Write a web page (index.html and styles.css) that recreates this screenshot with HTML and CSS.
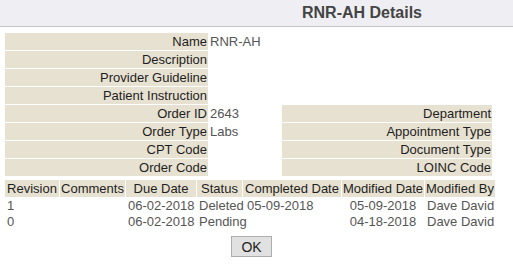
FILE: index.html
```html
<!DOCTYPE html>
<html lang="en">
<head>
  <meta charset="UTF-8" />
  <title>RNR-AH Details</title>
  <link rel="stylesheet" href="styles.css">
</head>
<body>
  <div class="title-bar">RNR-AH Details</div>

  <div class="content">
    <table class="details">
      <colgroup>
        <col class="c-lbl">
        <col class="c-val">
        <col class="c-lbl2">
        <col class="c-val2">
      </colgroup>
      <tr><td class="lbl">Name</td><td class="val" colspan="3">RNR-AH</td></tr>
      <tr><td class="lbl">Description</td><td class="val" colspan="3"></td></tr>
      <tr><td class="lbl">Provider Guideline</td><td class="val" colspan="3"></td></tr>
      <tr><td class="lbl">Patient Instruction</td><td class="val" colspan="3"></td></tr>
      <tr><td class="lbl">Order ID</td><td class="val">2643</td><td class="lbl">Department</td><td class="val"></td></tr>
      <tr><td class="lbl">Order Type</td><td class="val">Labs</td><td class="lbl">Appointment Type</td><td class="val"></td></tr>
      <tr><td class="lbl">CPT Code</td><td class="val"></td><td class="lbl">Document Type</td><td class="val"></td></tr>
      <tr><td class="lbl">Order Code</td><td class="val"></td><td class="lbl">LOINC Code</td><td class="val"></td></tr>
    </table>

    <table class="revisions">
      <colgroup>
        <col class="w-rev">
        <col class="w-com">
        <col class="w-due">
        <col class="w-status">
        <col class="w-done">
        <col class="w-mod">
        <col class="w-by">
      </colgroup>
      <tr>
        <th>Revision</th>
        <th>Comments</th>
        <th>Due Date</th>
        <th>Status</th>
        <th>Completed Date</th>
        <th>Modified Date</th>
        <th>Modified By</th>
      </tr>
      <tr>
        <td>1</td>
        <td></td>
        <td>06-02-2018</td>
        <td>Deleted</td>
        <td class="done">05-09-2018</td>
        <td class="mid">05-09-2018</td>
        <td class="mid">Dave David</td>
      </tr>
      <tr>
        <td>0</td>
        <td></td>
        <td>06-02-2018</td>
        <td>Pending</td>
        <td class="done"></td>
        <td class="mid">04-18-2018</td>
        <td class="mid">Dave David</td>
      </tr>
    </table>

    <div class="actions">
      <button type="button" class="ok-btn">OK</button>
    </div>
  </div>
</body>
</html>
```

FILE: styles.css
```css
* {
  box-sizing: border-box;
}

body {
  margin: 0;
  font-family: "Liberation Sans", Arial, sans-serif;
  font-size: 13px;
  color: #555;
  background: #fff;
}

.title-bar {
  height: 27px;
  line-height: 25px;
  padding-left: 302px;
  background: #efeef3;
  border-bottom: 1px solid #c6c6ca;
  font-size: 16px;
  font-weight: bold;
  color: #444;
}

.content {
  width: 492px;
  margin-left: 4px;
}

table {
  table-layout: fixed;
  width: 492px;
  border-collapse: separate;
  border-spacing: 1px;
}

.details {
  margin-top: 5px;
}

.c-lbl { width: 203px; }
.c-val { width: 72px; }
.c-lbl2 { width: 210px; }
.c-val2 { width: 2px; }

.details td {
  padding: 1px;
  line-height: 15px;
  height: 17px;
  white-space: nowrap;
}

.lbl {
  background: #e7e1d1;
  color: #1e1e1e;
  text-align: right;
}

.val {
  color: #555;
  text-align: left;
}

.revisions {
  margin-top: 2px;
}

.w-rev { width: 54px; }
.w-com { width: 65px; }
.w-due { width: 70px; }
.w-status { width: 45px; }
.w-done { width: 98px; }
.w-mod { width: 82px; }
.w-by { width: 70px; }

.revisions th {
  background: #e7e1d1;
  color: #1e1e1e;
  font-weight: normal;
  text-align: center;
  padding: 1px 0;
  line-height: 15px;
  white-space: nowrap;
}

.revisions td {
  padding: 0 2px;
  line-height: 15px;
  text-align: left;
  white-space: nowrap;
}

.revisions td.done {
  padding-left: 4px;
}

.revisions td.mid {
  text-align: center;
}

.actions {
  margin-top: 6px;
  text-align: center;
  padding-left: 3px;
}

.ok-btn {
  width: 41px;
  height: 21px;
  padding: 0;
  font-family: "Liberation Sans", Arial, sans-serif;
  font-size: 14px;
  color: #222;
  background: #e1e1e1;
  border: 1px solid #adadad;
  border-radius: 0;
}
```
